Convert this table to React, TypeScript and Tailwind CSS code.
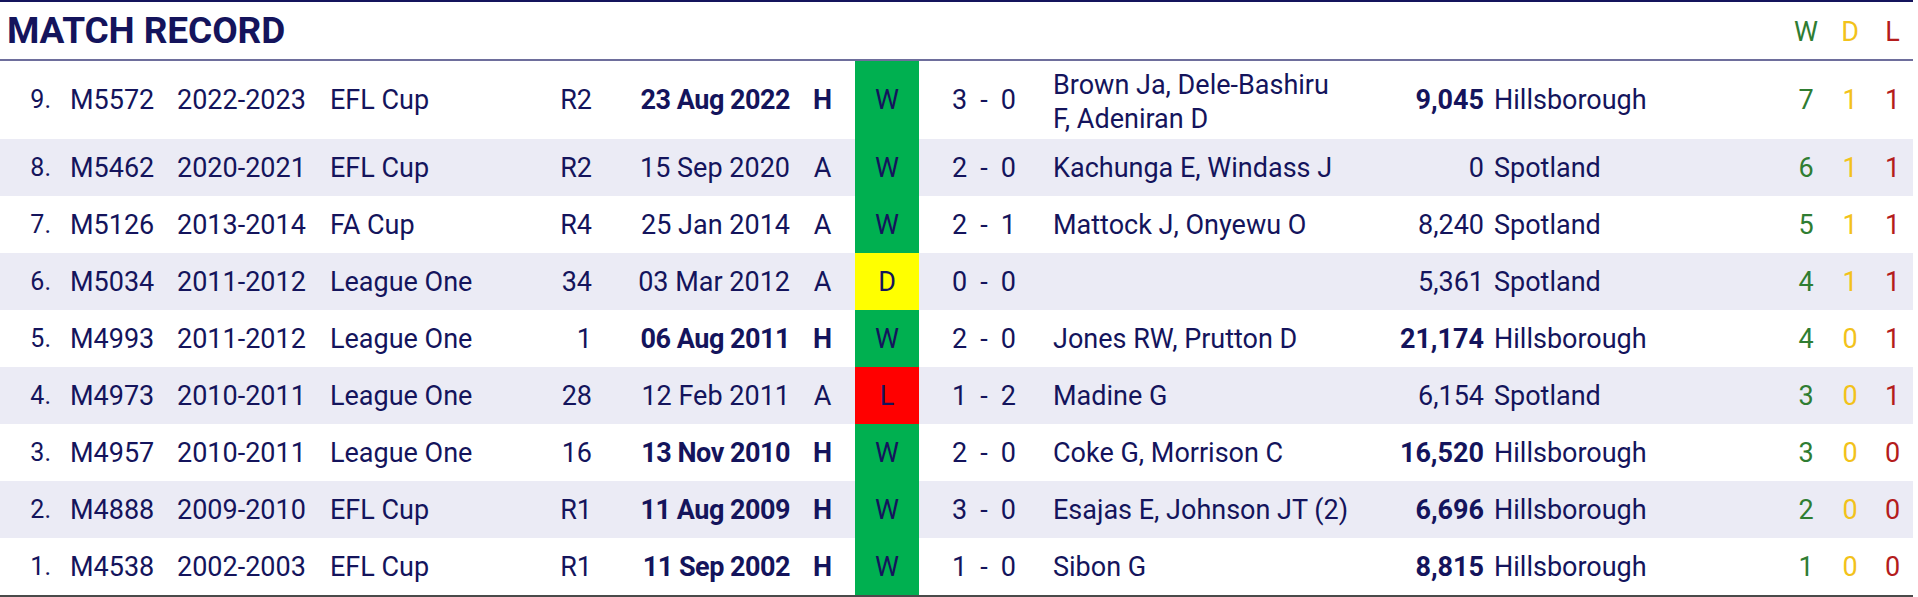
import React from "react";

type Row = {
  n: string;
  id: string;
  season: string;
  comp: string;
  rd: string;
  date: string;
  ha: "H" | "A";
  res: "W" | "D" | "L";
  f: string;
  a: string;
  scorers: string[];
  att: string;
  venue: string;
  w: number;
  d: number;
  l: number;
};

const rows: Row[] = [
  { n: "9.", id: "M5572", season: "2022-2023", comp: "EFL Cup", rd: "R2", date: "23 Aug 2022", ha: "H", res: "W", f: "3", a: "0", scorers: ["Brown Ja, Dele-Bashiru", "F, Adeniran D"], att: "9,045", venue: "Hillsborough", w: 7, d: 1, l: 1 },
  { n: "8.", id: "M5462", season: "2020-2021", comp: "EFL Cup", rd: "R2", date: "15 Sep 2020", ha: "A", res: "W", f: "2", a: "0", scorers: ["Kachunga E, Windass J"], att: "0", venue: "Spotland", w: 6, d: 1, l: 1 },
  { n: "7.", id: "M5126", season: "2013-2014", comp: "FA Cup", rd: "R4", date: "25 Jan 2014", ha: "A", res: "W", f: "2", a: "1", scorers: ["Mattock J, Onyewu O"], att: "8,240", venue: "Spotland", w: 5, d: 1, l: 1 },
  { n: "6.", id: "M5034", season: "2011-2012", comp: "League One", rd: "34", date: "03 Mar 2012", ha: "A", res: "D", f: "0", a: "0", scorers: [""], att: "5,361", venue: "Spotland", w: 4, d: 1, l: 1 },
  { n: "5.", id: "M4993", season: "2011-2012", comp: "League One", rd: "1", date: "06 Aug 2011", ha: "H", res: "W", f: "2", a: "0", scorers: ["Jones RW, Prutton D"], att: "21,174", venue: "Hillsborough", w: 4, d: 0, l: 1 },
  { n: "4.", id: "M4973", season: "2010-2011", comp: "League One", rd: "28", date: "12 Feb 2011", ha: "A", res: "L", f: "1", a: "2", scorers: ["Madine G"], att: "6,154", venue: "Spotland", w: 3, d: 0, l: 1 },
  { n: "3.", id: "M4957", season: "2010-2011", comp: "League One", rd: "16", date: "13 Nov 2010", ha: "H", res: "W", f: "2", a: "0", scorers: ["Coke G, Morrison C"], att: "16,520", venue: "Hillsborough", w: 3, d: 0, l: 0 },
  { n: "2.", id: "M4888", season: "2009-2010", comp: "EFL Cup", rd: "R1", date: "11 Aug 2009", ha: "H", res: "W", f: "3", a: "0", scorers: ["Esajas E, Johnson JT (2)"], att: "6,696", venue: "Hillsborough", w: 2, d: 0, l: 0 },
  { n: "1.", id: "M4538", season: "2002-2003", comp: "EFL Cup", rd: "R1", date: "11 Sep 2002", ha: "H", res: "W", f: "1", a: "0", scorers: ["Sibon G"], att: "8,815", venue: "Hillsborough", w: 1, d: 0, l: 0 },
];

const resBg: Record<Row["res"], string> = {
  W: "bg-[#00b050]",
  D: "bg-[#ffff00]",
  L: "bg-[#ff0000]",
};

const grid =
  "grid grid-cols-[51px_19px_107px_153px_200px_62px_198px_65px_64px_134px_327px_104px_10px_290px_44px_44px_41px]";

export default function App() {
  return (
    <div
      className="w-[1913px] h-[597px] bg-white text-[#14145c] flex flex-col border-t-2 border-b-2 border-t-[#14145c] border-b-[#4a4a4a]"
      style={{ fontFamily: "Roboto, 'Liberation Sans', sans-serif" }}
    >
      <div className="h-[59px] shrink-0 flex items-center border-b-2 border-[#6e6e9c] relative">
        <div className={`${grid} w-full items-center`}>
          <div className="col-span-14 pl-[7px] text-[37px] font-bold leading-none tracking-[-0.1px]">
            MATCH RECORD
          </div>
          <div className="text-center text-[27px] text-[#2f7d32] pt-[3px]">W</div>
          <div className="text-center text-[27px] text-[#f2c21b] pt-[3px]">D</div>
          <div className="text-center text-[27px] text-[#b41c1c] pt-[3px]">L</div>
        </div>
      </div>
      {rows.map((r, i) => {
        const bold = r.ha === "H";
        const first = i === 0;
        return (
          <div
            key={r.id}
            className={`${grid} ${first ? "h-[78px]" : "h-[57px]"} shrink-0 text-[27px] leading-[34px] ${
              i % 2 === 1 ? "bg-[#ebebf5]" : "bg-white"
            }`}
          >
            <div className="flex items-center justify-end text-[25px]">{r.n}</div>
            <div />
            <div className="flex items-center">{r.id}</div>
            <div className="flex items-center">{r.season}</div>
            <div className="flex items-center">{r.comp}</div>
            <div className="flex items-center justify-end">{r.rd}</div>
            <div className={`flex items-center justify-end ${bold ? "font-bold tracking-[-0.5px]" : ""}`}>{r.date}</div>
            <div className={`flex items-center justify-center ${bold ? "font-bold" : ""}`}>{r.ha}</div>
            <div className={`flex items-center justify-center ${resBg[r.res]}`}>{r.res}</div>
            <div className="flex items-center pl-[33px] gap-[13px]">
              <span>{r.f}</span>
              <span>-</span>
              <span>{r.a}</span>
            </div>
            <div className={`flex flex-col justify-center ${first ? "pt-[4px]" : ""}`}>
              {r.scorers.map((s, k) => (
                <div key={k} className="whitespace-nowrap">
                  {s}
                </div>
              ))}
            </div>
            <div className={`flex items-center justify-end ${bold ? "font-bold" : ""}`}>{r.att}</div>
            <div />
            <div className="flex items-center">{r.venue}</div>
            <div className="flex items-center justify-center text-[#2f7d32]">{r.w}</div>
            <div className="flex items-center justify-center text-[#f2c21b]">{r.d}</div>
            <div className="flex items-center justify-center text-[#b41c1c]">{r.l}</div>
          </div>
        );
      })}
    </div>
  );
}
